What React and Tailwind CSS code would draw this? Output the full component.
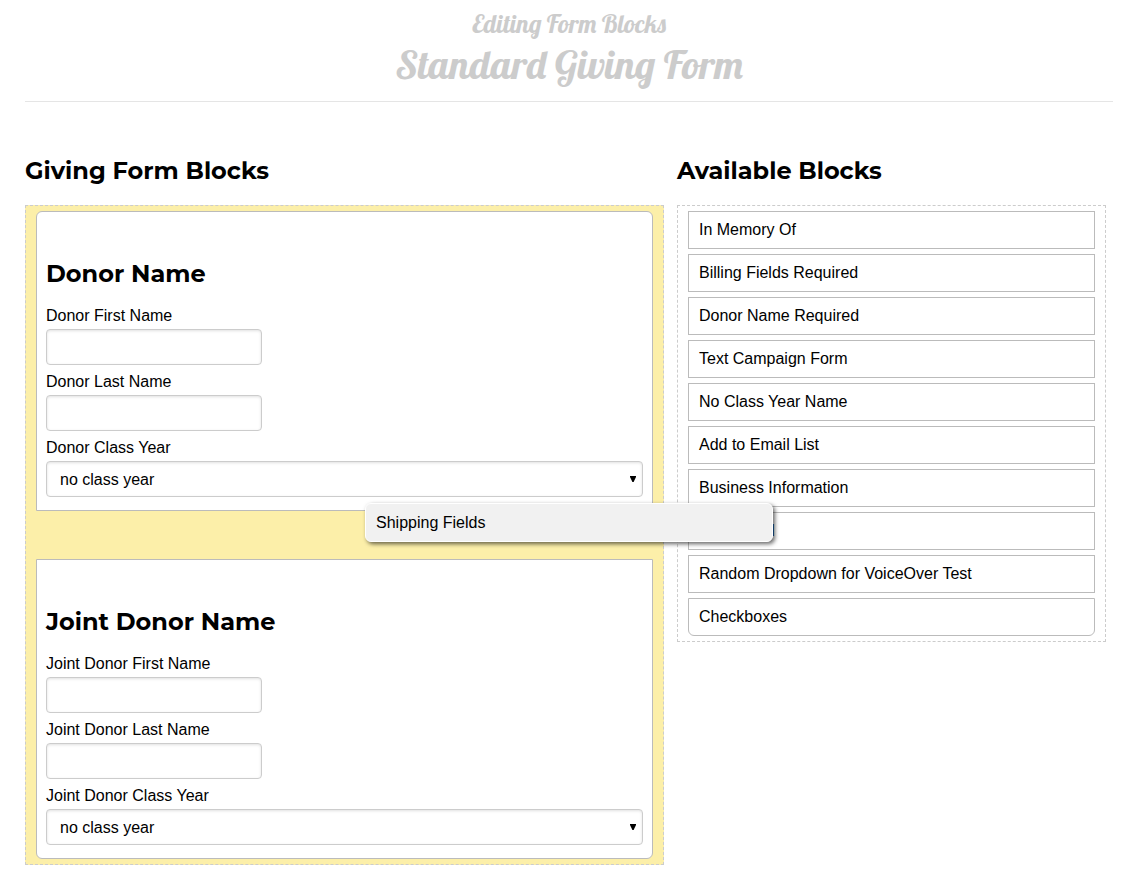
/* eslint-disable react/prop-types */
const availableBlocks = [
  'In Memory Of',
  'Billing Fields Required',
  'Donor Name Required',
  'Text Campaign Form',
  'No Class Year Name',
  'Add to Email List',
  'Business Information',
  'Fund Field',
  'Random Dropdown for VoiceOver Test',
  'Checkboxes',
];

const fieldStyle =
  'block h-9 rounded border border-[#ccc] bg-white px-[13px] shadow-[inset_0_1px_3px_rgba(0,0,0,0.12)]';

const TextField = ({ id, label }) => (
  <div className="mb-[5px]">
    <label htmlFor={id} className="mb-px block">
      {label}
    </label>
    <input id={id} type="text" className={`${fieldStyle} w-[216px]`} />
  </div>
);

const SelectField = ({ id, label }) => (
  <div>
    <label htmlFor={id} className="mb-px block">
      {label}
    </label>
    <div className="relative">
      <select id={id} className={`${fieldStyle} w-full appearance-none pt-0.5`}>
        <option>no class year</option>
      </select>
      <svg
        viewBox="0 0 6 6"
        className="pointer-events-none absolute top-[15px] right-[7px] size-1.5"
        aria-hidden="true">
        <path d="M0 0h6v1L3.6 6H2.4L0 1z" fill="#000" />
      </svg>
    </div>
  </div>
);

const FormBlock = ({ name, id }) => (
  <li className="border border-[#bbb] bg-white px-[9px] pb-[13px] first:rounded-t-md last:rounded-b-md">
    <h3 className="mt-[46px] mb-3.5 font-['Montserrat','Inter',sans-serif] text-2xl leading-8 font-bold">
      {name}
    </h3>
    <TextField id={`${id}-first`} label={name.replace('Name', 'First Name')} />
    <TextField id={`${id}-last`} label={name.replace('Name', 'Last Name')} />
    <SelectField id={`${id}-year`} label={name.replace('Name', 'Class Year')} />
  </li>
);

const ColumnTitle = ({ children }) => (
  <h2 className="mb-[18px] font-['Montserrat','Inter',sans-serif] text-2xl leading-8 font-bold">
    {children}
  </h2>
);

export default function App() {
  return (
    <div className="pr-[22px] pl-[25px] font-['Liberation_Sans',Arial,sans-serif] text-base text-black">
      <header className="border-b border-[#e5e5e5] pt-2 pb-3 text-center font-['Lobster','Liberation_Serif',serif] text-[#ccc]">
        <h2 className="text-[25px] leading-8">Editing Form Blocks</h2>
        <h1 className="text-[40px] leading-[49px]">Standard Giving Form</h1>
      </header>

      <main className="mt-[53px] grid grid-cols-[639fr_429fr] gap-x-[13px] pr-[7px]">
        <section>
          <ColumnTitle>Giving Form Blocks</ColumnTitle>
          <ul className="border border-dashed border-[#ccc] bg-[#fcefa9] px-2.5 py-[5px]">
            <FormBlock name="Donor Name" id="donor" />
            {/* drop slot with the block being dragged over it */}
            <li className="relative h-12">
              <div className="absolute -top-2 left-[329px] z-10 w-[408px] cursor-move rounded-md border border-white bg-[#f1f1f1] px-2.5 pt-[7px] pb-1.5 shadow-[2px_2px_4px_rgba(0,0,0,0.6)]">
                Shipping Fields
              </div>
            </li>
            <FormBlock name="Joint Donor Name" id="joint" />
          </ul>
        </section>

        <section>
          <ColumnTitle>Available Blocks</ColumnTitle>
          <ul className="flex flex-col gap-[5px] border border-dashed border-[#ccc] px-2.5 py-[5px]">
            {availableBlocks.map((block) => (
              <li
                key={block}
                className="cursor-move border border-[#bbb] bg-white px-2.5 py-1.5 last:rounded-b-md">
                {block}
              </li>
            ))}
          </ul>
        </section>
      </main>
    </div>
  );
}
